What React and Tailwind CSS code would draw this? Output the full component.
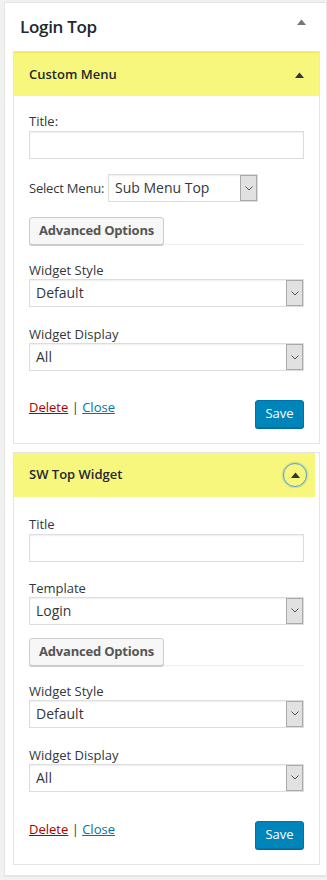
import React from 'react';

const font = { fontFamily: '"Open Sans", "Liberation Sans", sans-serif' };

const Caret = ({ className = '' }) => (
  <svg width="9" height="6" viewBox="0 0 9 6" className={className}>
    <path d="M0 6 L4.5 0.5 L9 6 Z" fill="currentColor" />
  </svg>
);

const Select = ({ value, className = '' }) => (
  <div className={`flex h-[28px] items-stretch border border-[#ddd] bg-white shadow-[inset_0_1px_2px_rgba(0,0,0,0.07)] ${className}`}>
    <span className="flex-1 truncate pl-[6px] text-[14px] leading-[26px] text-[#32373c]">{value}</span>
    <span className="flex w-[17px] items-center justify-center border border-[#aaa] bg-[#e1e1e1]">
      <svg width="8" height="5" viewBox="0 0 8 5">
        <path d="M0.5 0.5 L4 4 L7.5 0.5" fill="none" stroke="#555" strokeWidth="1" />
      </svg>
    </span>
  </div>
);

const Label = ({ children, className = '' }) => (
  <div className={`text-[13px] leading-[18px] text-[#32373c] ${className}`}>{children}</div>
);

const AdvancedButton = () => (
  <div className="flex items-end">
    <button className="h-[28px] rounded-[3px] border border-[#ccc] bg-[#f7f7f7] px-[9px] text-[13px] font-bold tracking-[-0.2px] text-[#555] shadow-[0_1px_0_#ccc]">
      Advanced Options
    </button>
    <div className="flex-1 border-b border-[#eee]" />
  </div>
);

const Footer = ({ className = '' }) => (
  <div className={`flex items-end justify-between ${className}`}>
    <div className="mb-[10px] text-[13px] text-[#32373c]">
      <a className="text-[#a00] underline">Delete</a> | <a className="text-[#0073aa] underline">Close</a>
    </div>
    <button className="h-[28px] w-[49px] rounded-[3px] border border-[#0073aa] bg-[#0085ba] text-[13px] text-white shadow-[0_1px_0_#006799]">
      Save
    </button>
  </div>
);

export default function App() {
  return (
    <div style={font} className="min-h-[880px] bg-[#f1f1f1] pl-[4px] pt-[2px]">
      <div className="border border-[#e5e5e5] bg-white pb-[10px] shadow-[0_1px_1px_rgba(0,0,0,0.04)]">
        <div className="flex h-[48px] items-center justify-between pl-[15px] pr-[20px]">
          <h2 className="text-[17px] font-semibold tracking-[-0.3px] text-[#23282d]">Login Top</h2>
          <Caret className="mb-[10px] text-[#72777c]" />
        </div>

        <div className="mr-[6px] ml-[8px] flex flex-col gap-[8px]">
          <div className="border border-[#e5e5e5] bg-white">
            <div className="flex h-[44px] items-center justify-between border-t border-[#ebea5f] bg-[#f8f77d] pl-[15px] pr-[15px]">
              <span className="text-[13px] font-semibold text-[#23282d]">Custom Menu</span>
              <Caret className="text-[#32373c]" />
            </div>
            <div className="px-[15px] pt-[16px] pb-[15px]">
              <Label>Title:</Label>
              <div className="mt-[1px] h-[28px] border border-[#ddd] shadow-[inset_0_1px_2px_rgba(0,0,0,0.07)]" />
              <div className="mt-[15px] flex items-center">
                <Label className="w-[79px] whitespace-nowrap tracking-[-0.2px]">Select Menu:</Label>
                <Select value="Sub Menu Top" className="w-[150px]" />
              </div>
              <div className="mt-[15px]">
                <AdvancedButton />
              </div>
              <div className="mt-[16px]">
                <Label>Widget Style</Label>
                <Select value="Default" />
              </div>
              <div className="mt-[18px]">
                <Label>Widget Display</Label>
                <Select value="All" />
              </div>
              <Footer className="mt-[27px]" />
            </div>
          </div>

          <div className="border border-[#e5e5e5] bg-white">
            <div className="mr-[4px] flex h-[44px] items-center justify-between bg-[#f8f77d] pl-[15px] pr-[8px]">
              <span className="text-[13px] font-semibold text-[#23282d]">SW Top Widget</span>
              <span className="flex h-[24px] w-[24px] items-center justify-center rounded-full border border-[#5b9dd9] shadow-[0_0_2px_rgba(30,140,190,0.8)]">
                <Caret className="text-[#32373c]" />
              </span>
            </div>
            <div className="px-[15px] pt-[18px] pb-[15px]">
              <Label>Title</Label>
              <div className="mt-[1px] h-[28px] border border-[#ddd] shadow-[inset_0_1px_2px_rgba(0,0,0,0.07)]" />
              <div className="mt-[17px]">
                <Label>Template</Label>
                <Select value="Login" />
              </div>
              <div className="mt-[13px]">
                <AdvancedButton />
              </div>
              <div className="mt-[16px]">
                <Label>Widget Style</Label>
                <Select value="Default" />
              </div>
              <div className="mt-[18px]">
                <Label>Widget Display</Label>
                <Select value="All" />
              </div>
              <Footer className="mt-[28px]" />
            </div>
          </div>
        </div>
      </div>
    </div>
  );
}
